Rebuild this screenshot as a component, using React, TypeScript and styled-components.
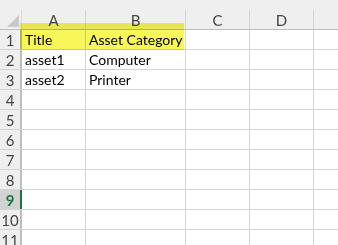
import React from 'react'
import styled, { createGlobalStyle } from 'styled-components'

const GlobalStyle = createGlobalStyle`
  html, body {
    margin: 0;
    padding: 0;
    background: #ffffff;
  }
`

const columns = [
  { key: 'A', width: 64 },
  { key: 'B', width: 100 },
  { key: 'C', width: 64 },
  { key: 'D', width: 64 },
  { key: 'E', width: 40 },
]

const rows: string[][] = [
  ['Title', 'Asset Category'],
  ['asset1', 'Computer'],
  ['asset2', 'Printer'],
]

const TOTAL_ROWS = 11
const SELECTED_ROW = 9

const App: React.FC = () => {
  return (
    <>
      <GlobalStyle />
      <Sheet>
        <HeaderRow>
          <Corner>
            <svg width="12" height="12" viewBox="0 0 12 12">
              <polygon points="12,0 12,12 0,12" fill="#c9c9c9" />
            </svg>
          </Corner>
          {columns.map(col => (
            <ColHeader key={col.key} $width={col.width}>
              {col.key !== 'E' ? col.key : ''}
            </ColHeader>
          ))}
        </HeaderRow>

        {Array.from({ length: TOTAL_ROWS }, (_, i) => {
          const rowNum = i + 1
          const data = rows[i] || []
          const selected = rowNum === SELECTED_ROW
          return (
            <Row key={rowNum}>
              <RowHeader $selected={selected}>{rowNum}</RowHeader>
              {columns.map((col, c) => (
                <Cell key={col.key} $width={col.width}>
                  {data[c] || ''}
                </Cell>
              ))}
            </Row>
          )
        })}

        <Highlight />
      </Sheet>
    </>
  )
}

const Sheet = styled.div`
  position: relative;
  width: 338px;
  height: 245px;
  overflow: hidden;
  background: #ffffff;
  font-family: Lato, 'Liberation Sans', sans-serif;
  font-size: 14px;
  color: #000;
`

const HeaderRow = styled.div`
  display: flex;
  height: 29px;
  background: #efefef;
  border-bottom: 1px solid #bdbdbd;
`

const Corner = styled.div`
  width: 22px;
  flex: none;
  display: flex;
  align-items: flex-end;
  justify-content: flex-end;
  padding: 0 2px 2px 0;
  box-sizing: border-box;
  border-right: 1px solid #dadada;
  height: 19px;
  margin-top: 10px;
`

const ColHeader = styled.div<{ $width: number }>`
  width: ${p => p.$width - 1}px;
  flex: none;
  margin-top: 10px;
  height: 19px;
  border-right: 1px solid #d4d4d4;
  display: flex;
  align-items: center;
  justify-content: center;
  color: #444;
  font-size: 15px;
`

const Row = styled.div`
  display: flex;
  height: 19px;
  border-bottom: 1px solid #d4d4d4;
`

const RowHeader = styled.div<{ $selected: boolean }>`
  width: 20px;
  flex: none;
  background: ${p => (p.$selected ? '#d2d2d2' : '#efefef')};
  border-right: 2px solid ${p => (p.$selected ? '#217346' : '#bdbdbd')};
  color: ${p => (p.$selected ? '#217346' : '#444')};
  font-weight: ${p => (p.$selected ? 700 : 400)};
  display: flex;
  align-items: center;
  justify-content: center;
  font-size: 15px;
`

const Cell = styled.div<{ $width: number }>`
  width: ${p => p.$width}px;
  flex: none;
  border-right: 1px solid #d4d4d4;
  padding-left: 3px;
  box-sizing: border-box;
  display: flex;
  align-items: center;
  white-space: nowrap;
  line-height: 19px;
`

const Highlight = styled.div`
  position: absolute;
  left: 20px;
  top: 23px;
  width: 164px;
  height: 27px;
  background: #f7f75a;
  mix-blend-mode: multiply;
  pointer-events: none;
`

export default App
